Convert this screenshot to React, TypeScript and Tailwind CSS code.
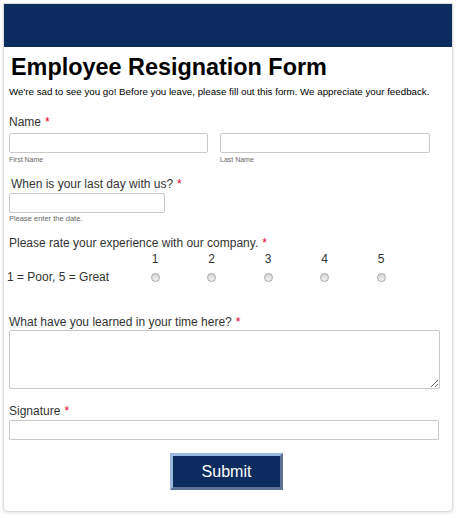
const ratings = [1, 2, 3, 4, 5];

function Req() {
  return <span className="text-[#e4002b] ml-1">*</span>;
}

export default function App() {
  return (
    <div className="w-[457px] h-[518px] bg-white pt-[3px] px-[3px] font-['Liberation_Sans',Arial,sans-serif] text-[#333]">
      <div className="w-[450px] h-[509px] border border-[#dcdcdc] rounded-b-[5px] shadow-[0_1px_3px_rgba(0,0,0,0.12)] bg-white">
        <div className="h-[43px] bg-[#0c2b5e]" />
        <div className="pl-[5px] pr-[12px]">
          <h1 className="mt-[6px] ml-[2px] text-[23.4px] leading-[28px] font-bold text-black">
            Employee Resignation Form
          </h1>
          <p className="mt-[5px] text-[9.75px] leading-[12px] text-black">
            We're sad to see you go! Before you leave, please fill out this form. We appreciate your feedback.
          </p>

          <div className="mt-[16px] text-[12px] leading-[16px]">
            Name<Req />
          </div>
          <div className="mt-[1px] flex gap-[12px]">
            <div className="w-[199px]">
              <input className="w-full h-[20px] border border-[#c8c8c8] rounded-[2px]" />
              <div className="text-[7px] leading-[9px] text-[#666]">First Name</div>
            </div>
            <div className="w-[210px]">
              <input className="w-full h-[20px] border border-[#c8c8c8] rounded-[2px]" />
              <div className="text-[7px] leading-[9px] text-[#666]">Last Name</div>
            </div>
          </div>

          <div className="mt-[12px] ml-[2px] text-[12px] leading-[16px]">
            When is your last day with us?<Req />
          </div>
          <input className="mt-[1px] w-[156px] h-[20px] border border-[#c8c8c8] rounded-[2px] block" />
          <div className="mt-[1px] text-[7.5px] leading-[10px] text-[#666]">Please enter the date.</div>

          <div className="mt-[11px] text-[12px] leading-[16px]">
            Please rate your experience with our company.<Req />
          </div>
          <div className="-ml-[2px] grid grid-cols-[141px_56.5px_56.5px_56.5px_56.5px_56.5px] text-[12px] leading-[16px]">
            <div />
            {ratings.map((n) => (
              <div key={n} className="text-center w-[14px]">
                {n}
              </div>
            ))}
            <div className="mt-[2px]">1 = Poor, 5 = Great</div>
            {ratings.map((n) => (
              <div key={n} className="mt-[2px] w-[14px] flex items-center justify-center">
                <span className="w-[9px] h-[9px] rounded-full border border-[#a8a8a8] bg-gradient-to-b from-[#d6d6d6] to-[#f2f2f2]" />
              </div>
            ))}
          </div>

          <div className="mt-[29px] text-[12px] leading-[16px]">
            What have you learned in your time here?<Req />
          </div>
          <textarea className="mt-0 block w-[431px] h-[59px] border border-[#c8c8c8] rounded-[2px] resize-y" />

          <div className="mt-[14px] text-[12px] leading-[16px]">
            Signature<Req />
          </div>
          <input className="mt-[1px] block w-[430px] h-[20px] border border-[#c8c8c8] rounded-[2px]" />

          <div className="mt-[13px] flex justify-center">
            <button className="ml-[4px] w-[113px] h-[37px] bg-[#0c2b5e] text-white text-[16px] border-[3px] border-t-[#9bb8e0] border-l-[#9bb8e0] border-b-[#5d7391] border-r-[#5d7391]">
              Submit
            </button>
          </div>
        </div>
      </div>
    </div>
  );
}
